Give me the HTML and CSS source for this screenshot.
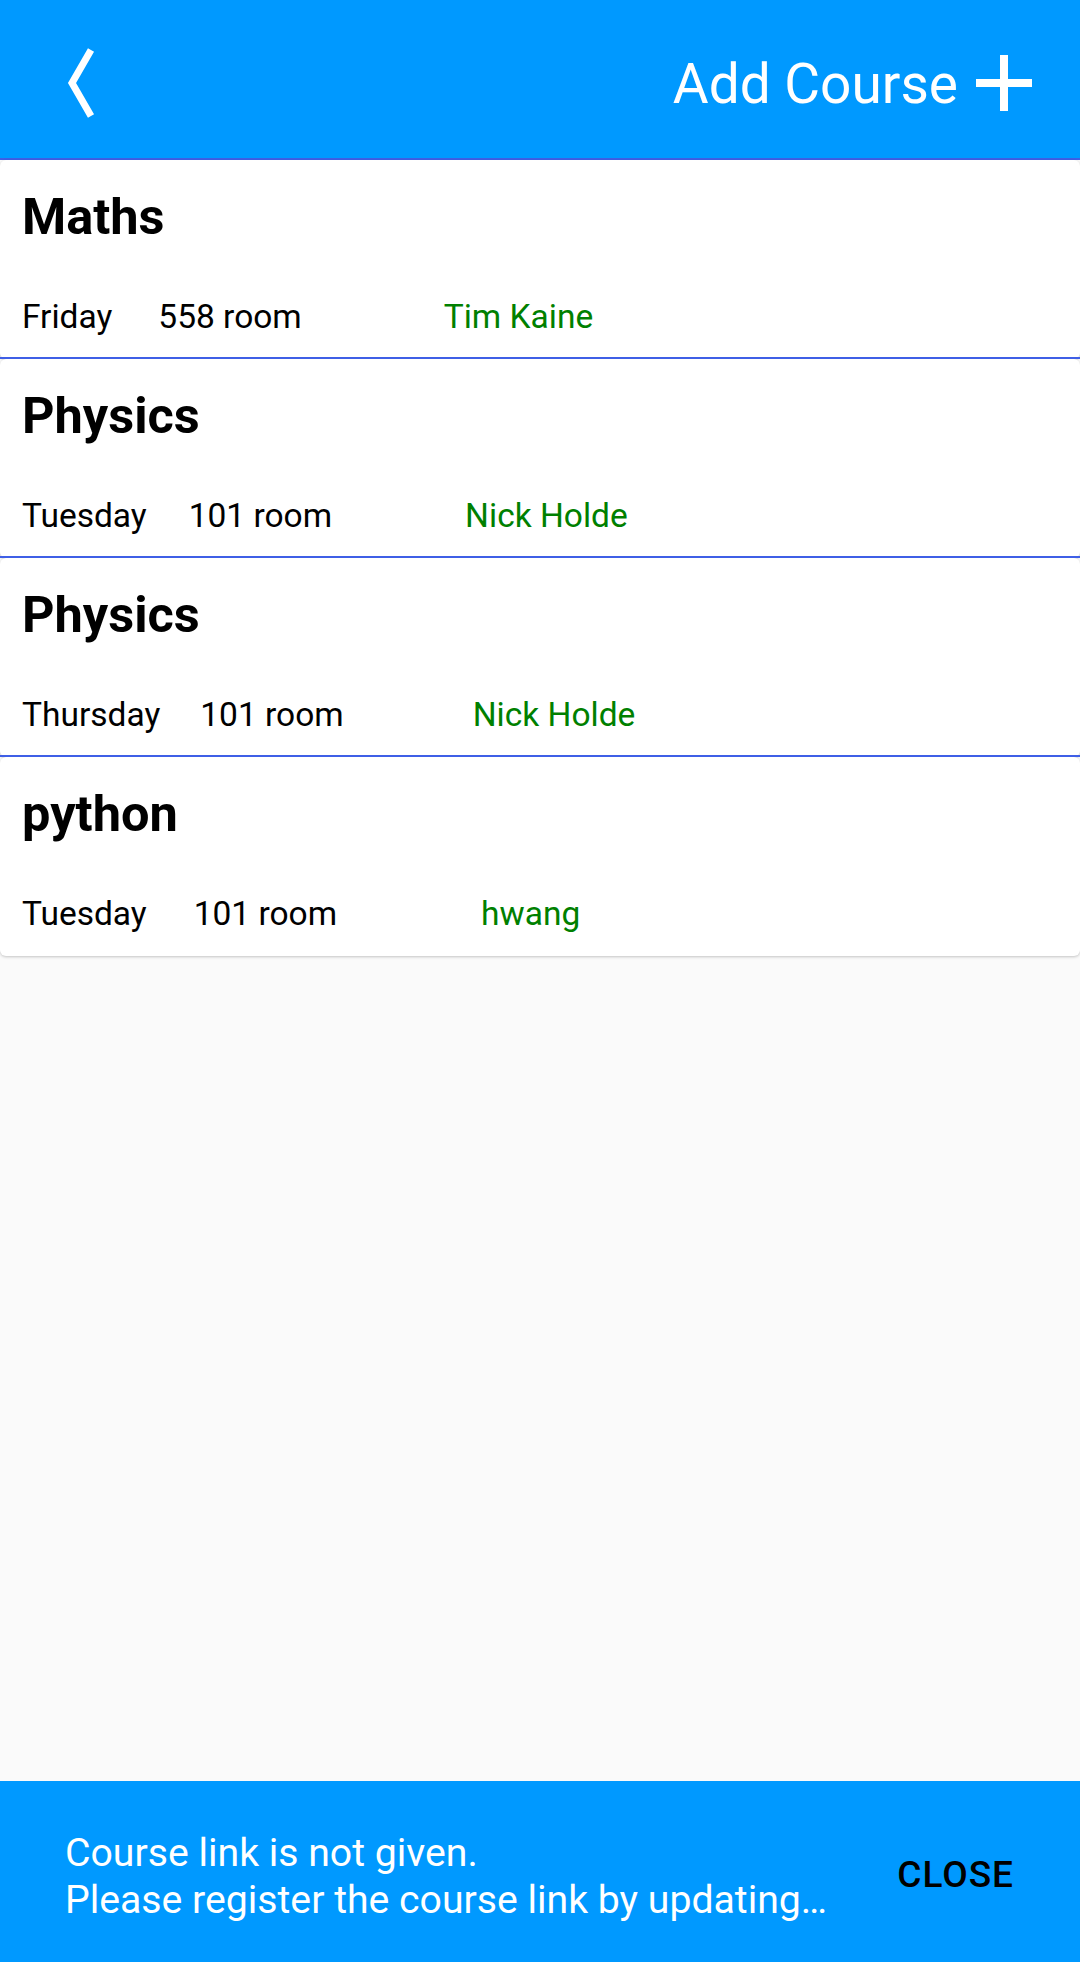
FILE: index.html
```html
<!DOCTYPE html>
<html lang="en">
<head>
<meta charset="utf-8">
<title>Courses</title>
<link rel="stylesheet" href="styles.css">
</head>
<body>
<div class="app">
  <header class="topbar">
    <svg class="back" width="32" height="72" viewBox="0 0 32 72" aria-hidden="true">
      <polyline points="25,3 6,36 25,69" fill="none" stroke="#fff" stroke-width="7" stroke-linejoin="miter" stroke-linecap="butt"/>
    </svg>
    <div class="spacer"></div>
    <div class="add-title">Add Course</div>
    <svg class="plus" width="56" height="56" viewBox="0 0 56 56" aria-hidden="true">
      <rect x="0" y="24" width="56" height="8" fill="#fff"/>
      <rect x="24" y="0" width="8" height="56" fill="#fff"/>
    </svg>
  </header>

  <main class="list">
    <section class="card">
      <div class="title">Maths</div>
      <div class="row">
        <span class="day">Friday</span>
        <span class="room g46">558 room</span>
        <span class="teacher t142">Tim Kaine</span>
      </div>
    </section>
    <div class="divider"></div>
    <section class="card">
      <div class="title">Physics</div>
      <div class="row">
        <span class="day">Tuesday</span>
        <span class="room g42">101 room</span>
        <span class="teacher t133">Nick Holde</span>
      </div>
    </section>
    <div class="divider"></div>
    <section class="card">
      <div class="title">Physics</div>
      <div class="row">
        <span class="day">Thursday</span>
        <span class="room g40">101 room</span>
        <span class="teacher t129">Nick Holde</span>
      </div>
    </section>
    <div class="divider"></div>
    <section class="card">
      <div class="title">python</div>
      <div class="row">
        <span class="day">Tuesday</span>
        <span class="room g47">101 room</span>
        <span class="teacher t144">hwang</span>
      </div>
    </section>
  </main>

  <div class="snackbar">
    <div class="msg">
      <div class="line">Course link is not given.</div>
      <div class="line">Please register the course link by updating…</div>
    </div>
    <div class="action">CLOSE</div>
  </div>
</div>
</body>
</html>
```
FILE: styles.css
```css
html, body {
  margin: 0;
  padding: 0;
}
body {
  background: #fafafa;
  font-family: Roboto, "Noto Sans", "Liberation Sans", sans-serif;
  width: 1080px;
  height: 1962px;
  overflow: hidden;
}
.app {
  position: relative;
  width: 1080px;
  height: 1962px;
  display: flex;
  flex-direction: column;
}
.topbar {
  height: 158px;
  background: #0099ff;
  border-bottom: 2px solid #3f5fe6;
  display: flex;
  align-items: flex-start;
  padding: 0 48px 0 66px;
  box-sizing: content-box;
  width: calc(1080px - 114px);
}
.back {
  margin-top: 47px;
  flex: none;
}
.spacer {
  flex: 1;
}
.add-title {
  color: #fff;
  font-size: 55px;
  line-height: 64px;
  margin-top: 52px;
  font-weight: 400;
}
.plus {
  margin-top: 55px;
  margin-left: 18px;
  flex: none;
}
.list {
  display: flex;
  flex-direction: column;
}
.card {
  background: #fff;
  border-radius: 6px;
  box-shadow: 0 1px 3px rgba(0, 0, 0, 0.22);
  padding: 27px 20px 0 22px;
  height: 199px;
  box-sizing: border-box;
}
.divider {
  height: 2px;
  margin-top: -2px;
  background: #3f5fe6;
  position: relative;
  z-index: 1;
}
.title {
  font-size: 50.5px;
  line-height: 60px;
  font-weight: 700;
  color: #000;
}
.row {
  margin-top: 50px;
  display: flex;
  font-size: 33.5px;
  line-height: 40px;
  color: #000;
  white-space: nowrap;
}
.teacher {
  color: #008000;
}
.g40 { margin-left: 40px; }
.g42 { margin-left: 42px; }
.g46 { margin-left: 46px; }
.g47 { margin-left: 47px; }
.t129 { margin-left: 129px; }
.t133 { margin-left: 133px; }
.t142 { margin-left: 142px; }
.t144 { margin-left: 144px; }
.snackbar {
  margin-top: auto;
  height: 181px;
  background: #0099ff;
  display: flex;
  align-items: center;
  padding: 0 66px 0 65px;
  box-sizing: border-box;
}
.msg {
  flex: 1;
  color: #fff;
  font-size: 39.2px;
  line-height: 47px;
  padding-top: 11px;
  white-space: nowrap;
}
.action {
  color: #000;
  font-size: 37px;
  font-weight: 500;
  letter-spacing: 1px;
  line-height: 44px;
  margin-top: 6px;
}
```
